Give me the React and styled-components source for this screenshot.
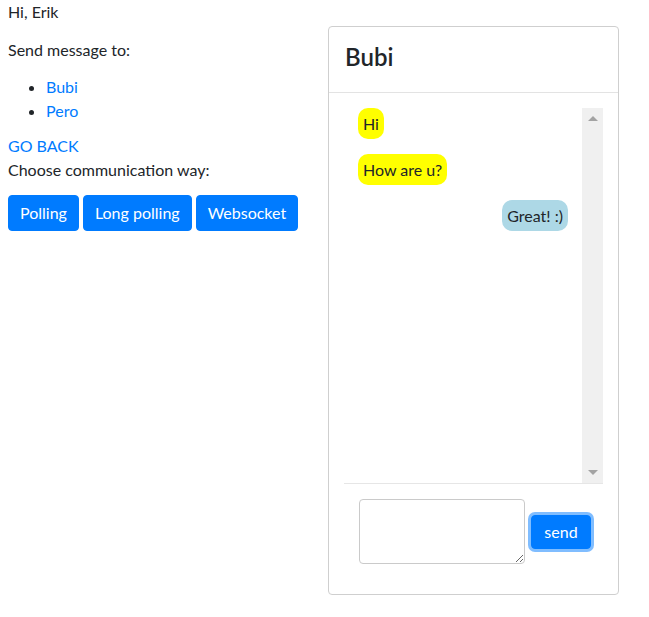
import styled, { createGlobalStyle } from 'styled-components';

const GlobalStyle = createGlobalStyle`
  body {
    margin: 0;
    font-family: Lato, 'Noto Sans', sans-serif;
    font-size: 16px;
    line-height: 24px;
    color: #212529;
    background-color: #FFFFFF;
  }
`;

const messages = [
  { id: 1, text: 'Hi', mine: false },
  { id: 2, text: 'How are u?', mine: false },
  { id: 3, text: 'Great! :)', mine: true },
];

function App() {
  return (
    <>
      <GlobalStyle />
      <Page>
        <Sidebar>
          <Greeting>Hi, Erik</Greeting>
          <Paragraph>Send message to:</Paragraph>
          <UserList>
            <li><Link href="#">Bubi</Link></li>
            <li><Link href="#">Pero</Link></li>
          </UserList>
          <Link href="#">GO BACK</Link>
          <Paragraph>Choose communication way:</Paragraph>
          <ButtonRow>
            <Button>Polling</Button>
            <Button>Long polling</Button>
            <Button>Websocket</Button>
          </ButtonRow>
        </Sidebar>
        <Card>
          <CardHeader>
            <Title>Bubi</Title>
          </CardHeader>
          <CardBody>
            <ChatBox>
              <Messages>
                {messages.map((m) => (
                  <Bubble key={m.id} $mine={m.mine}>{m.text}</Bubble>
                ))}
              </Messages>
              <ScrollTrack>
                <Arrow />
                <Arrow $down />
              </ScrollTrack>
            </ChatBox>
            <SendForm>
              <MessageInput />
              <SendButton>send</SendButton>
            </SendForm>
          </CardBody>
        </Card>
      </Page>
    </>
  );
}

export default App;

const Page = styled.div`
  display: flex;
  align-items: flex-start;
`;

const Sidebar = styled.div`
  width: 312px;
  padding-left: 8px;
  display: flex;
  flex-direction: column;
  align-items: flex-start;
`;

const Greeting = styled.div`
  margin-bottom: 14px;
`;

const Paragraph = styled.p`
  margin: 0;
`;

const UserList = styled.ul`
  margin: 13px 0 11px;
  padding-left: 38px;
`;

const Link = styled.a`
  color: #007BFF;
  text-decoration: none;
`;

const ButtonRow = styled.div`
  display: flex;
  gap: 4px;
  margin-top: 13px;
`;

const Button = styled.button`
  font-family: inherit;
  font-size: 16px;
  line-height: 22px;
  padding: 6px 11px;
  border: 1px solid #007BFF;
  border-radius: 4px;
  background-color: #007BFF;
  color: #FFFFFF;
  white-space: nowrap;
`;

const Card = styled.div`
  width: 289px;
  margin: 26px 0 0 8px;
  border: 1px solid #CFCFCF;
  border-radius: 4px;
`;

const CardHeader = styled.div`
  padding: 15px 16px 21px;
  border-bottom: 1px solid #E3E3E3;
`;

const Title = styled.h4`
  margin: 0;
  font-size: 24px;
  line-height: 29px;
  font-weight: 600;
`;

const CardBody = styled.div`
  padding: 15px 15px 30px;
`;

const ChatBox = styled.div`
  display: flex;
  height: 375px;
  border-bottom: 1px solid #E6E6E6;
`;

const Messages = styled.div`
  flex: 1;
  overflow: hidden;
  padding: 0 14px;
  display: flex;
  flex-direction: column;
  align-items: flex-start;
  gap: 15px;
`;

const ScrollTrack = styled.div`
  width: 21px;
  background-color: #F0F0F0;
  display: flex;
  flex-direction: column;
  justify-content: space-between;
  align-items: center;
  padding: 8px 0;
`;

const Arrow = styled.div`
  width: 0;
  height: 0;
  border-left: 5px solid transparent;
  border-right: 5px solid transparent;
  border-bottom: ${(p) => (p.$down ? '0' : '5px solid #A3A3A3')};
  border-top: ${(p) => (p.$down ? '5px solid #A3A3A3' : '0')};
`;

const Bubble = styled.div`
  flex-shrink: 0;
  padding: 5px;
  line-height: 21px;
  border-radius: 10px;
  background-color: ${(p) => (p.$mine ? '#ADD8E6' : '#FFFF00')};
  align-self: ${(p) => (p.$mine ? 'flex-end' : 'flex-start')};
`;

const SendForm = styled.div`
  display: flex;
  align-items: center;
  justify-content: center;
  gap: 6px;
  margin: 15px 0 0 3px;
`;

const MessageInput = styled.textarea`
  width: 166px;
  height: 65px;
  box-sizing: border-box;
  border: 1px solid #CACACA;
  border-radius: 4px;
  font-family: inherit;
  font-size: 16px;
`;

const SendButton = styled.button`
  font-family: inherit;
  font-size: 16px;
  line-height: 22px;
  padding: 5px 12px;
  border: 1px solid #007BFF;
  border-radius: 4px;
  background-color: #007BFF;
  color: #FFFFFF;
  box-shadow: 0 0 0 3px #80BDFF;
`;
